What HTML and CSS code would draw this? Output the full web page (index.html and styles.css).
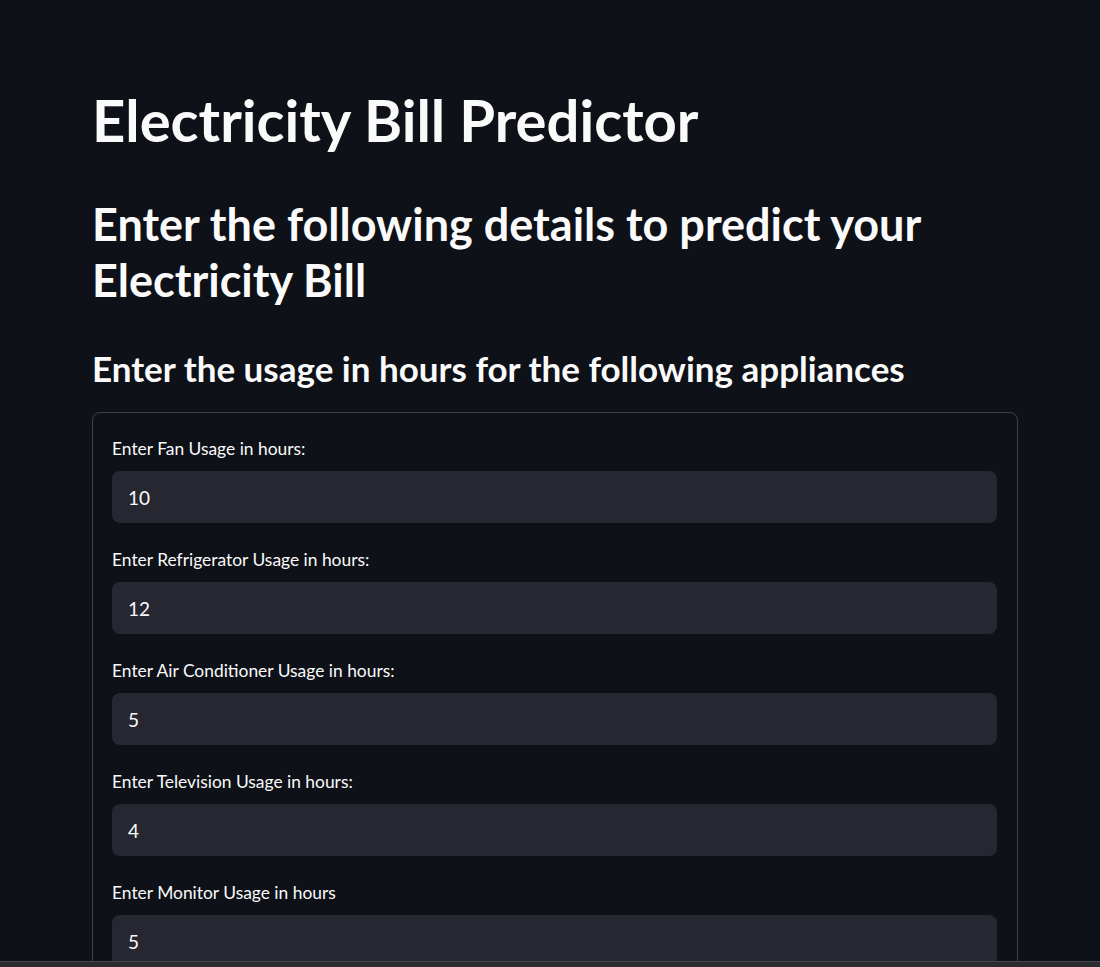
FILE: index.html
```html
<!DOCTYPE html>
<html lang="en">
<head>
  <meta charset="UTF-8" />
  <meta name="viewport" content="width=device-width, initial-scale=1" />
  <title>Electricity Bill Predictor</title>
  <link rel="stylesheet" href="styles.css">
</head>
<body>

  <div class="main">
    <h1 class="title">Electricity Bill Predictor</h1>
    <h2 class="subtitle">Enter the following details to predict your Electricity Bill</h2>
    <h3 class="section">Enter the usage in hours for the following appliances</h3>

    <!-- usage form -->
    <div class="form">
      <div class="field">
        <label for="fan">Enter Fan Usage in hours:</label>
        <input type="text" id="fan" value="10">
      </div>
      <div class="field">
        <label for="fridge">Enter Refrigerator Usage in hours:</label>
        <input type="text" id="fridge" value="12">
      </div>
      <div class="field">
        <label for="ac">Enter Air Conditioner Usage in hours:</label>
        <input type="text" id="ac" value="5">
      </div>
      <div class="field">
        <label for="tv">Enter Television Usage in hours:</label>
        <input type="text" id="tv" value="4">
      </div>
      <div class="field">
        <label for="monitor">Enter Monitor Usage in hours</label>
        <input type="text" id="monitor" value="5">
      </div>
    </div>
  </div>

  <div class="bottom-bar"></div>

</body>
</html>
```

FILE: styles.css
```css
html, body {
  height: 100%;
  overflow: hidden;
}

body {
  margin: 0;
  background: #0e1117;
  color: #fafafa;
  font-family: Lato, "Noto Sans", sans-serif;
}

.main {
  padding: 0 82px 0 92px;
}

.title {
  margin: 0;
  padding-top: 88px;
  font-size: 58px;
  line-height: 64px;
  font-weight: 700;
}

.subtitle {
  margin: 44px 0 0;
  font-size: 45px;
  line-height: 56px;
  font-weight: 700;
}

.section {
  margin: 38px 0 0;
  font-size: 35px;
  line-height: 44px;
  font-weight: 700;
}

.form {
  margin-top: 22px;
  border: 1px solid rgb(250 250 250 / 0.2);
  border-radius: 8px;
  padding: 24px 20px 20px 19px;
}

.field {
  margin-bottom: 25px;
}

.field label {
  display: block;
  font-size: 17.4px;
  line-height: 24px;
  margin-bottom: 10px;
}

.field input {
  display: block;
  width: 100%;
  height: 52px;
  box-sizing: border-box;
  border: none;
  border-radius: 8px;
  background: #262730;
  color: #fafafa;
  font-family: inherit;
  font-size: 19px;
  padding: 0 16px;
  outline: none;
}

.bottom-bar {
  position: fixed;
  left: 0;
  right: 0;
  bottom: 0;
  height: 5px;
  background: #2b2c31;
  border-top: 1px solid #45464c;
}
```
